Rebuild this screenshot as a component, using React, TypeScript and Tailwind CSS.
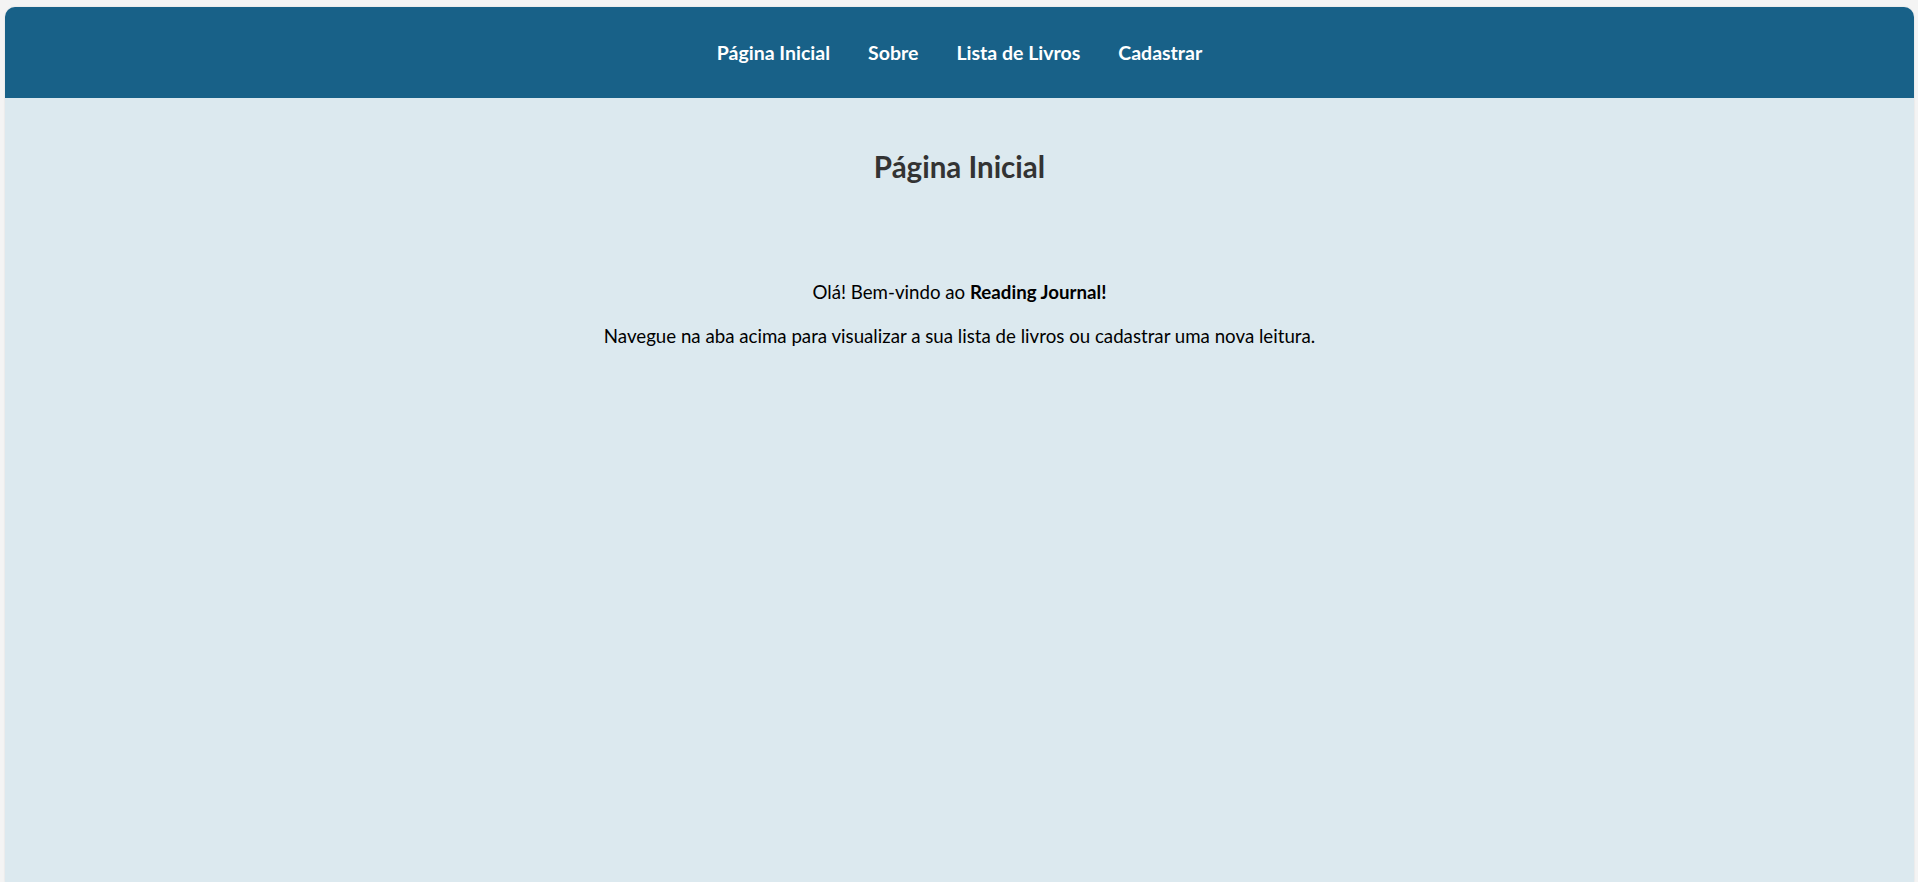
import React from 'react';

const links = ['Página Inicial', 'Sobre', 'Lista de Livros', 'Cadastrar'];

const App = () => {
    return (
        <div className="min-h-screen flex flex-col bg-[#f4f4f4] pt-[7px] pl-[5px] pr-[4px] font-['Lato',sans-serif]">
            <div className="flex-1 flex flex-col rounded-t-[10px] overflow-hidden bg-[#dce9ef] shadow-[0_0_2px_rgba(0,0,0,0.12)]">
                <nav className="h-[91px] shrink-0 bg-[#186188] flex items-center justify-center gap-[38px]">
                    {links.map((link) => (
                        <a
                            key={link}
                            href="#"
                            className="text-white font-bold text-[19.5px] leading-[24px]"
                        >
                            {link}
                        </a>
                    ))}
                </nav>
                <main className="flex flex-col items-center text-center">
                    <h1 className="mt-[49px] text-[29.5px] leading-[40px] font-bold text-[#333333]">
                        Página Inicial
                    </h1>
                    <p className="mt-[94px] text-[18.7px] leading-[23px] text-black">
                        Olá! Bem-vindo ao <strong>Reading Journal!</strong>
                    </p>
                    <p className="mt-[21px] text-[18.7px] leading-[23px] text-black">
                        Navegue na aba acima para visualizar a sua lista de livros ou cadastrar uma nova leitura.
                    </p>
                </main>
            </div>
        </div>
    );
};

export default App;
